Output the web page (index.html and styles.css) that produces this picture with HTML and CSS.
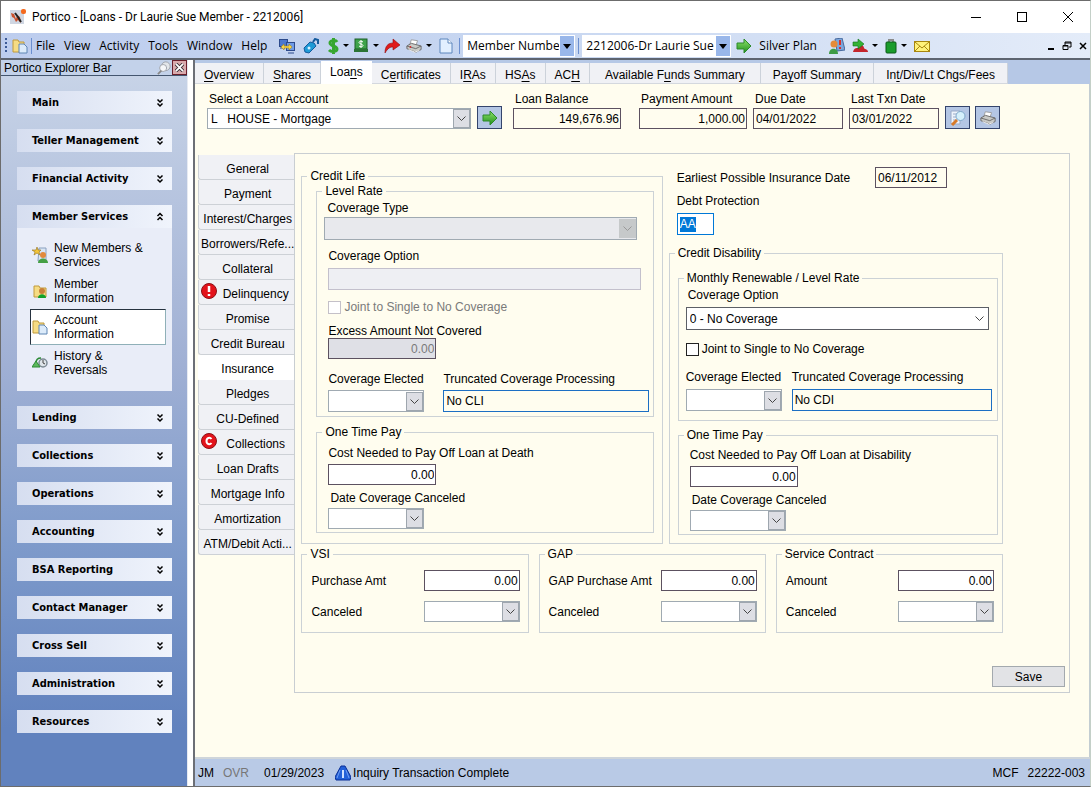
FILE: index.html
```html
<!DOCTYPE html>
<html lang="en">
<head>
<meta charset="utf-8">
<title>Portico - [Loans - Dr Laurie Sue Member - 2212006]</title>
<link rel="stylesheet" href="styles.css">
</head>
<body>
<svg class="defs" aria-hidden="true">
  <defs>
    <linearGradient id="green" x1="0" y1="0" x2="0" y2="1"><stop offset="0" stop-color="#8ee36a"/><stop offset="1" stop-color="#1f8f1c"/></linearGradient>
    <symbol id="i-go" viewBox="0 0 16 16"><path d="M1 5h7V1l7 7-7 7v-4H1z" fill="url(#green)" stroke="#2c8a2a"/></symbol>
    <symbol id="i-folder" viewBox="0 0 16 16"><path d="M1 2h5l1 2h5v10H1z" fill="#f6dc84" stroke="#c09a3c"/><path d="M7 6h5l3 3v6H7z" fill="#dcebfa" stroke="#5f86b4"/></symbol>
    <symbol id="i-print" viewBox="0 0 18 16"><path d="M6 1l7 1-2 6-7-1z" fill="#fff" stroke="#999"/><path d="M1 8l5-3 11 3v4l-6 3-10-4z" fill="#c9cac6" stroke="#666"/><path d="M1 8l10 3 6-3" fill="none" stroke="#666"/><path d="M3 12l7 3 5-2" fill="none" stroke="#fff"/></symbol>
    <symbol id="i-down" viewBox="0 0 8 10"><path d="M1.500 1.500l2.500 2.500 2.500-2.500M1.500 5.500l2.500 2.500 2.500-2.500" fill="none" stroke="#000" stroke-width="1.500"/></symbol>
    <symbol id="i-up" viewBox="0 0 8 10"><path d="M1.500 4l2.500-2.500 2.500 2.500M1.500 8l2.500-2.500 2.500 2.500" fill="none" stroke="#000" stroke-width="1.500"/></symbol>
  </defs>
</svg>
<div class="window">
  <header class="titlebar">
    <svg class="app-icon" viewBox="0 0 16 16"><rect x="0" y="1" width="14" height="14" fill="#cfd6e2"/><path d="M1 4l3 1 2 5 1-4 3 2 1 6-3-3-2 2-2-4-2-1z" fill="#c9502c"/><path d="M5 4l3 4 3 5" stroke="#222" stroke-width="2" fill="none"/><rect x="11" y="0" width="5" height="5" rx="2" fill="#f4691e"/></svg>
    <h1>Portico - [Loans - Dr Laurie Sue Member - 2212006]</h1>
    <div class="win-buttons">
      <button aria-label="Minimize"><svg viewBox="0 0 12 12"><path d="M1 6.500h10" stroke="#000"/></svg></button>
      <button aria-label="Maximize"><svg viewBox="0 0 12 12"><rect x="1.500" y="1.500" width="9" height="9" fill="none" stroke="#000"/></svg></button>
      <button aria-label="Close"><svg viewBox="0 0 12 12"><path d="M1 1l10 10M11 1L1 11" stroke="#000"/></svg></button>
    </div>
  </header>

  <nav class="toolbar" aria-label="Menu">
    <span class="grip"></span>
    <svg class="ic" viewBox="0 0 16 16"><use href="#i-folder"/></svg>
    <span class="sep"></span>
    <div class="menus">
      <button>File</button><button>View</button><button>Activity</button><button>Tools</button><button>Window</button><button>Help</button>
    </div>
    <div class="tools">
      <button aria-label="Connect"><svg class="ic" viewBox="0 0 16 16"><rect x=".5" y="1.500" width="8" height="7" fill="#4b78cf" stroke="#2c4a8c"/><rect x="7.500" y="4.500" width="8" height="8" fill="#6f9be6" stroke="#2c4a8c"/><path d="M9 15h6M1 10h5" stroke="#2c4a8c"/><path d="M2 9l3-3v2h5V6l3 3-3 3v-2H5v2z" fill="#f7d64a" stroke="#a8861d" stroke-width=".6"/></svg></button>
      <button aria-label="Scanner"><svg class="ic" viewBox="0 0 16 16"><path d="M1 10l6-6 4 1 2 3-7 7-4-1z" fill="#1f9ad6" stroke="#145a9c"/><path d="M10 4l2-3 3 1v4" fill="none" stroke="#145a9c" stroke-width="2"/><circle cx="6" cy="10" r="1.500" fill="#d6f1ff"/></svg></button>
    </div>
    <div class="tools split">
      <button aria-label="Cash"><svg class="ic narrow" viewBox="0 0 12 16"><path d="M10 4C9 2 3 2 3 5s7 3 7 6-6 3-8 1M6.500 0v16" fill="none" stroke="#37a62f" stroke-width="3"/></svg><i class="caret"></i></button>
      <button aria-label="Check"><svg class="ic" viewBox="0 0 16 16"><rect x="2" y="1" width="12" height="10" fill="#3fa34b" stroke="#1d5e27"/><path d="M10 4c-1-1-4-1-4 .5S10 6 10 7.500 7 9 6 8M8 2v8" fill="none" stroke="#fff"/><path d="M1 11h14v3H1z" fill="#2b7435"/></svg><i class="caret"></i></button>
    </div>
    <div class="tools close-set">
      <button aria-label="Forward"><svg class="ic" viewBox="0 0 16 16"><path d="M1 15C1 8 4 5 9 5V1l7 6-7 5V9C6 9 4 10 1 15z" fill="#e01b1b" stroke="#8d0d0d" stroke-width=".6"/></svg></button>
      <button aria-label="Print"><svg class="ic" viewBox="0 0 18 16"><use href="#i-print"/><circle cx="5" cy="9" r="1" fill="#e02020"/></svg><i class="caret"></i></button>
      <button aria-label="New page"><svg class="ic" viewBox="0 0 16 16"><path d="M2 1h8l4 4v10H2z" fill="#e2efff" stroke="#5d86bd"/><path d="M10 1v4h4" fill="#fff" stroke="#5d86bd"/></svg></button>
    </div>
    <span class="sep"></span>
    <select class="tb-select by" aria-label="Search by"><option>Member Numbe</option></select>
    <span class="sep"></span>
    <select class="tb-select who" aria-label="Member"><option>2212006-Dr Laurie Sue</option></select>
    <button class="go" aria-label="Go"><svg class="ic" viewBox="0 0 16 16"><use href="#i-go"/></svg></button>
    <button class="plan">Silver Plan</button>
    <div class="tools last">
      <button aria-label="People"><svg class="ic" viewBox="0 0 16 16"><path d="M6 1l7-1 3 12-8 1z" fill="#7ca6dc" stroke="#47699d"/><path d="M11 2v5M11 9v2" stroke="#d8302a" stroke-width="2"/><circle cx="5" cy="6" r="3.500" fill="#e58b3a"/><path d="M0 16c0-7 9-7 9 0z" fill="#3e9b46"/></svg></button>
      <button aria-label="Transfer"><svg class="ic" viewBox="0 0 16 16"><path d="M1 14c1-4 3-4 5-4s1-3 3-3 3 2 3 3 4 1 4 4z" fill="#c4252c"/><path d="M1 4h5V1l6 5-6 5V8H1z" fill="#35b335" stroke="#13701a" stroke-width=".6"/></svg><i class="caret"></i></button>
      <button aria-label="Bag"><svg class="ic narrow" viewBox="0 0 12 16"><path d="M4 5V2h4v3" fill="none" stroke="#8b8b8b" stroke-width="2"/><rect x="1" y="4" width="10" height="11" rx="1" fill="#1a9c2c" stroke="#0b5a17"/></svg><i class="caret"></i></button>
      <button aria-label="Mail"><svg class="ic" viewBox="0 0 16 16"><rect x=".5" y="3.500" width="15" height="10" fill="#fff27a" stroke="#a8860e"/><path d="M1 4l7 6 7-6M1 13l5-5M15 13l-5-5" fill="none" stroke="#a8860e"/></svg></button>
    </div>
    <div class="mdi">
      <button aria-label="Minimize document"><svg viewBox="0 0 10 10"><path d="M2 8h6" stroke="#000" stroke-width="2"/></svg></button>
      <button aria-label="Restore document"><svg viewBox="0 0 10 10"><path d="M3 4V1h6v5H7M3 2h6" fill="none" stroke="#000"/><path d="M1 4.500h5v4H1zM1 5h5" fill="none" stroke="#000"/></svg></button>
      <button aria-label="Close document"><svg viewBox="0 0 10 10"><path d="M2 2l6 6M8 2L2 8" stroke="#000" stroke-width="1.500"/></svg></button>
    </div>
  </nav>

  <div class="workspace">
    <aside class="explorer">
      <div class="explorer-head">
        <h2>Portico Explorer Bar</h2>
        <button class="pin" aria-label="Pin"><svg viewBox="0 0 16 16"><circle cx="10" cy="6" r="5" fill="#e3e6ea" stroke="#9a9ea6"/><circle cx="7" cy="8" r="4" fill="#f6f7f9" stroke="#9a9ea6"/><path d="M5 11l-4 4" stroke="#888" stroke-width="2"/></svg></button>
        <button class="close" aria-label="Close explorer"><svg viewBox="0 0 10 10"><path d="M1 1l8 8M9 1L1 9" stroke="#3c3036" stroke-width="4"/><path d="M1 1l8 8M9 1L1 9" stroke="#fff" stroke-width="2"/></svg></button>
      </div>
      <nav class="groups" aria-label="Explorer">
        <button class="group">Main<svg class="chev"><use href="#i-down"/></svg></button>
        <button class="group">Teller Management<svg class="chev"><use href="#i-down"/></svg></button>
        <button class="group">Financial Activity<svg class="chev"><use href="#i-down"/></svg></button>
        <section>
          <button class="group" aria-expanded="true">Member Services<svg class="chev"><use href="#i-up"/></svg></button>
          <div class="items">
            <a href="#new"><svg class="ic" viewBox="0 0 16 16"><path d="M7 1h7v13H6z" fill="#d9e6f5" stroke="#8aa0bf"/><path d="M5 0l1 3h3L7 5l1 3-3-2-3 2 1-3-3-2h4z" fill="#f3c53a" stroke="#94701a" stroke-width=".6"/><circle cx="11" cy="8" r="3" fill="#e28a3c"/><path d="M6 16c0-6 10-6 10 0z" fill="#45a045"/></svg><span>New Members &amp; Services</span></a>
            <a href="#member"><svg class="ic" viewBox="0 0 16 16"><path d="M2 3h5l1 2h6v9H2z" fill="#f6dc84" stroke="#c09a3c"/><circle cx="10" cy="8" r="3" fill="#c8813a"/><path d="M6 15c0-5 8-5 8 0z" fill="#12a02a"/></svg><span>Member Information</span></a>
            <a href="#account" class="current" aria-current="page"><svg class="ic" viewBox="0 0 16 16"><use href="#i-folder"/></svg><span>Account Information</span></a>
            <a href="#history"><svg class="ic" viewBox="0 0 16 16"><circle cx="11" cy="8" r="4" fill="#dfe5ea" stroke="#7d8a94" stroke-width="1.500"/><path d="M11 5v3l2 1" stroke="#444" fill="none"/><path d="M9 3C5 3 4 6 4 8" stroke="#2b8a35" stroke-width="1.500" fill="none"/><path d="M0 12l4-6 4 6z" fill="#5cb85c" stroke="#2b8a35"/></svg><span>History &amp; Reversals</span></a>
          </div>
        </section>
        <button class="group">Lending<svg class="chev"><use href="#i-down"/></svg></button>
        <button class="group">Collections<svg class="chev"><use href="#i-down"/></svg></button>
        <button class="group">Operations<svg class="chev"><use href="#i-down"/></svg></button>
        <button class="group">Accounting<svg class="chev"><use href="#i-down"/></svg></button>
        <button class="group">BSA Reporting<svg class="chev"><use href="#i-down"/></svg></button>
        <button class="group">Contact Manager<svg class="chev"><use href="#i-down"/></svg></button>
        <button class="group">Cross Sell<svg class="chev"><use href="#i-down"/></svg></button>
        <button class="group">Administration<svg class="chev"><use href="#i-down"/></svg></button>
        <button class="group">Resources<svg class="chev"><use href="#i-down"/></svg></button>
      </nav>
    </aside>

    <main class="main">
      <div class="tabs">
        <button><u>O</u>verview</button><button><u>S</u>hares</button><button class="active">Loa<u>n</u>s</button><button>C<u>e</u>rtificates</button><button>I<u>R</u>As</button><button>HS<u>A</u>s</button><button>AC<u>H</u></button><button class="wider">Available F<u>u</u>nds Summary</button><button class="wide">Pa<u>y</u>off Summary</button><button class="wide">In<u>t</u>/Div/Lt Chgs/Fees</button>
      </div>
      <div class="page">
        <div class="summary">
          <div class="field account"><label for="acct">Select a Loan Account</label><select id="acct" class="combo"><option>L &nbsp; HOUSE - Mortgage</option></select></div>
          <button class="tool-btn first" aria-label="Open account"><svg class="ic" viewBox="0 0 16 16"><use href="#i-go"/></svg></button>
          <div class="field amount balance"><label for="bal">Loan Balance</label><input id="bal" class="num" value="149,676.96"></div>
          <div class="field amount"><label for="pay">Payment Amount</label><input id="pay" class="num" value="1,000.00"></div>
          <div class="field date"><label for="due">Due Date</label><input id="due" value="04/01/2022"></div>
          <div class="field date"><label for="last">Last Txn Date</label><input id="last" value="03/01/2022"></div>
          <button class="tool-btn" aria-label="Preview"><svg class="ic" viewBox="0 0 16 16"><path d="M1 1h9v13H1z" fill="#eef3fb" stroke="#9aabc8"/><path d="M3 4h4M3 7h3M3 10h4" stroke="#9aabc8"/><path d="M7 10l-5 5" stroke="#d77a2a" stroke-width="3"/><circle cx="10.500" cy="6" r="4.500" fill="#d5f0fb" stroke="#7fa7c9"/></svg></button>
          <button class="tool-btn" aria-label="Print loan"><svg class="ic" viewBox="0 0 18 16"><use href="#i-print"/></svg></button>
        </div>

        <div class="detail">
          <div class="side-tabs">
            <button>General</button><button>Payment</button><button>Interest/Charges</button><button>Borrowers/Refe...</button><button>Collateral</button>
            <button class="flag"><svg class="badge" viewBox="0 0 16 16"><circle cx="8" cy="8" r="7.500" fill="#e3131b" stroke="#8c1015"/><path d="M8 3v6M8 11v2" stroke="#fff" stroke-width="2.500"/></svg>Delinquency</button>
            <button>Promise</button><button>Credit Bureau</button><button class="active">Insurance</button><button>Pledges</button><button>CU-Defined</button>
            <button class="flag"><svg class="badge" viewBox="0 0 16 16"><circle cx="8" cy="8" r="7.500" fill="#e3131b" stroke="#8c1015"/><path d="M10.500 6C9 4 5.500 4.500 5.500 8S9 12 10.500 10" fill="none" stroke="#fff" stroke-width="2"/></svg>Collections</button>
            <button>Loan Drafts</button><button>Mortgage Info</button><button>Amortization</button><button>ATM/Debit Acti...</button>
          </div>

          <form class="form">
            <div class="columns">
              <fieldset class="outer">
                <legend>Credit Life</legend>
                <fieldset class="inner rate">
                  <legend>Level Rate</legend>
                  <div class="field type"><label for="ctype">Coverage Type</label><select id="ctype" class="combo" disabled><option></option></select></div>
                  <div class="field option"><label for="copt">Coverage Option</label><input id="copt" disabled></div>
                  <label class="check"><input type="checkbox" disabled>Joint to Single to No Coverage</label>
                  <div class="field excess"><label for="excess">Excess Amount Not Covered</label><input id="excess" class="num" value="0.00" disabled></div>
                  <div class="pair">
                    <div class="field elected"><label for="ce1">Coverage Elected</label><select id="ce1" class="combo"><option></option></select></div>
                    <div class="field trunc"><label for="tr1">Truncated Coverage Processing</label><input id="tr1" value="No CLI"></div>
                  </div>
                </fieldset>
                <fieldset class="inner once">
                  <legend>One Time Pay</legend>
                  <div class="field cost"><label for="cost1">Cost Needed to Pay Off Loan at Death</label><input id="cost1" class="num" value="0.00"></div>
                  <div class="field cancel"><label for="dc1">Date Coverage Canceled</label><select id="dc1" class="combo"><option></option></select></div>
                </fieldset>
              </fieldset>

              <div class="right">
                <div class="earliest"><label for="early">Earliest Possible Insurance Date</label><input id="early" value="06/11/2012"></div>
                <div class="field debt"><label for="debt">Debt Protection</label><input id="debt" value="AA"></div>
                <fieldset class="outer disability">
                  <legend>Credit Disability</legend>
                  <fieldset class="inner monthly">
                    <legend>Monthly Renewable / Level Rate</legend>
                    <div class="field type"><label for="copt2">Coverage Option</label><select id="copt2" class="combo open"><option>0 - No Coverage</option></select></div>
                    <label class="check"><input type="checkbox">Joint to Single to No Coverage</label>
                    <div class="pair">
                      <div class="field elected"><label for="ce2">Coverage Elected</label><select id="ce2" class="combo"><option></option></select></div>
                      <div class="field trunc"><label for="tr2">Truncated Coverage Processing</label><input id="tr2" value="No CDI"></div>
                    </div>
                  </fieldset>
                  <fieldset class="inner once">
                    <legend>One Time Pay</legend>
                    <div class="field cost"><label for="cost2">Cost Needed to Pay Off Loan at Disability</label><input id="cost2" class="num" value="0.00"></div>
                    <div class="field cancel"><label for="dc2">Date Coverage Canceled</label><select id="dc2" class="combo"><option></option></select></div>
                  </fieldset>
                </fieldset>
              </div>
            </div>

            <div class="extras">
              <fieldset><legend>VSI</legend>
                <div class="line"><label for="vsi">Purchase Amt</label><input id="vsi" class="num" value="0.00"></div>
                <div class="line"><label for="vsic">Canceled</label><select id="vsic" class="combo"><option></option></select></div>
              </fieldset>
              <fieldset><legend>GAP</legend>
                <div class="line"><label for="gap">GAP Purchase Amt</label><input id="gap" class="num" value="0.00"></div>
                <div class="line"><label for="gapc">Canceled</label><select id="gapc" class="combo"><option></option></select></div>
              </fieldset>
              <fieldset><legend>Service Contract</legend>
                <div class="line"><label for="svc">Amount</label><input id="svc" class="num" value="0.00"></div>
                <div class="line"><label for="svcc">Canceled</label><select id="svcc" class="combo"><option></option></select></div>
              </fieldset>
            </div>
            <button type="button" class="save">Save</button>
          </form>
        </div>
      </div>
      <footer class="status">
        <span>JM</span><span class="off">OVR</span><span class="today">01/29/2023</span>
        <svg class="ic" viewBox="0 0 16 16"><path d="M6 1h4l6 11-1 3H1l-1-3z" fill="#2360d8" stroke="#0b2f96"/><path d="M8 5v8" stroke="#cfe0ff" stroke-width="2"/><path d="M5 5l-3 8M11 5l3 8" stroke="#6f9df2"/></svg>
        <span>Inquiry Transaction Complete</span>
        <span class="mcf">MCF</span><span>22222-003</span>
      </footer>
    </main>
  </div>
</div>
</body>
</html>
```
FILE: styles.css
```css
* { box-sizing: border-box; }
body {
  margin: 0;
  color: #000;
  font: 12px/14px "Liberation Sans", Arial, sans-serif;
}
button, input, select {
  margin: 0;
  color: inherit;
  font: inherit;
}
button {
  padding: 0;
  border: 0;
  background: none;
}
h1, h2 { margin: 0; font: inherit; }
svg { display: block; flex: none; }
.defs { position: absolute; width: 0; height: 0; }
.ic { width: 16px; height: 16px; }
.ic.narrow { width: 12px; }

.window {
  display: flex;
  flex-direction: column;
  min-height: 100vh;
  border: 1px solid #6c6c6c;
  border-right-color: #c4d0c8;
  background: #fff;
}

/* Title bar */
.titlebar {
  display: flex;
  align-items: center;
  height: 32px;
  padding: 0 16px 0 9px;
  font: 12px/16px Roboto, "Noto Sans", sans-serif;
}
.app-icon { width: 16px; height: 16px; margin-right: 6px; }
.win-buttons { display: flex; gap: 34px; margin-left: auto; }
.win-buttons svg { width: 12px; height: 12px; }

/* Menu and tool bar */
.toolbar {
  display: flex;
  align-items: center;
  height: 27px;
  padding-left: 4px;
  border-bottom: 2px solid #5d6470;
  background: linear-gradient(90deg, #bdcdee, #c8d7f1 50%, #e4ecf9);
  font: 12px/16px "Open Sans", "Noto Sans", sans-serif;
  white-space: nowrap;
}
.toolbar button { display: flex; align-items: center; }
.grip {
  width: 2px;
  height: 16px;
  margin-right: 5px;
  background: repeating-linear-gradient(#3c5a96 0 2px, transparent 2px 4px);
}
.sep { width: 1px; height: 16px; margin: 0 3px; background: #6b8fd0; }
.menus { display: flex; gap: 9px; margin: 0 12px 0 1px; }
.tools { display: flex; gap: 8px; margin-right: 8px; }
.tools.split { gap: 4px; margin-right: 5px; }
.tools.close-set { gap: 6px; margin-right: 2px; }
.caret {
  margin-left: 4px;
  border: 3px solid transparent;
  border-top-color: #000;
  border-bottom: 0;
}
.tb-select {
  height: 22px;
  padding: 0 16px 0 4px;
  border: 0;
  border-radius: 0;
  appearance: none;
  background: url("data:image/svg+xml,%3Csvg xmlns='http://www.w3.org/2000/svg' width='14' height='20'%3E%3Crect width='14' height='20' fill='%2399b7ea'/%3E%3Cpath d='M3 8h8l-4 5z'/%3E%3C/svg%3E") no-repeat right 1px center #fff;
}
.by { width: 112px; }
.who { width: 149px; }
.go { margin: 0 7px 0 5px; }
.plan { margin-right: 12px; }
.tools.last { gap: 7px; }
.mdi { display: flex; gap: 6px; margin-left: auto; padding-right: 2px; }
.mdi svg { width: 10px; height: 10px; }

/* Explorer bar */
.workspace { display: flex; flex: 1; }
.explorer {
  flex: 0 0 187px;
  border-right: 1px solid #e6eaf2;
  background: linear-gradient(#c9d5e8, #a0b0d4 42%, #7f9bcb 66%, #6182be 92%);
}
.explorer-head {
  display: flex;
  align-items: center;
  height: 16px;
  padding-left: 3px;
  border-bottom: 1px solid #44566f;
  background: #c3d2ea;
}
.pin { margin-left: auto; }
.pin svg { width: 16px; height: 14px; }
.close {
  padding: 2px;
  border: 1px solid #6a1f2c;
  background: #d9a9ac;
}
.close svg { width: 9px; height: 9px; }
.groups {
  display: flex;
  flex-direction: column;
  gap: 15px;
  padding: 15px 15px 15px 16px;
}
.group {
  display: flex;
  align-items: center;
  justify-content: space-between;
  width: 100%;
  height: 23px;
  padding: 0 8px 0 15px;
  background: linear-gradient(90deg, #d6def0, #f0f4fc);
  font: bold 11px/14px "DejaVu Sans Condensed", "Noto Sans", sans-serif;
}
.chev { width: 8px; height: 10px; }
.items { padding: 9px 6px 10px 13px; background: #e9edf8; }
.items a {
  display: flex;
  align-items: center;
  gap: 6px;
  min-height: 36px;
  padding: 3px 21px 3px 1px;
  border: 1px solid transparent;
  color: inherit;
  text-decoration: none;
}
.items .current { border-color: #26323f #8fb0b8 #8fb0b8 #26323f; background: #fff; }

/* Main area */
.main {
  display: flex;
  flex: 1;
  flex-direction: column;
  min-width: 0;
  margin-left: 5px;
  border-left: 2px solid #6c6f76;
}
.tabs {
  display: flex;
  align-items: flex-end;
  height: 24px;
  background: #b6c8e6;
}
.tabs button {
  height: 21px;
  padding: 4px 9px 0;
  border-right: 1px solid #ccd2da;
  border-bottom: 1px solid #d4d8de;
  background: #f0f1f5;
  white-space: nowrap;
}
.tabs .active { height: 23px; padding-top: 0; padding-bottom: 1px; border: 0; background: #fff; }
.tabs .wide { padding-left: 12px; padding-right: 12px; }
.tabs .wider { padding-left: 15px; padding-right: 15px; }
u { text-underline-offset: 2px; }
.page {
  display: flex;
  flex: 1;
  flex-direction: column;
  padding: 8px 19px 64px 3px;
  border-right: 1px solid #c3cdd2;
  background: #fffdef;
}
.field { display: flex; flex-direction: column; align-items: flex-start; gap: 2px; }
.field label { padding-left: 2px; white-space: nowrap; }
input, select {
  width: 100%;
  min-width: 0;
  height: 21px;
  padding: 0 2px;
  border: 1px solid #5c5160;
  border-radius: 0;
  background: transparent;
}
.num { padding-right: 1px; text-align: right; }
.combo {
  padding: 0 20px 0 3px;
  border-color: #a0aab2;
  appearance: none;
  background: url("data:image/svg+xml,%3Csvg xmlns='http://www.w3.org/2000/svg' width='17' height='19'%3E%3Crect x='.5' y='.5' width='16' height='18' fill='%23dddee4' stroke='%239ea6ae'/%3E%3Cpath d='M4.500 7.500l4 4 4-4' fill='none' stroke='%23444'/%3E%3C/svg%3E") no-repeat right center #fff;
}
.combo.open {
  border-color: #5c5f66;
  background-image: url("data:image/svg+xml,%3Csvg xmlns='http://www.w3.org/2000/svg' width='17' height='19'%3E%3Cpath d='M4.500 7.500l4 4 4-4' fill='none' stroke='%23444'/%3E%3C/svg%3E");
}
.combo:disabled {
  opacity: 1;
  background-color: #e8e9ed;
  background-image: url("data:image/svg+xml,%3Csvg xmlns='http://www.w3.org/2000/svg' width='17' height='19'%3E%3Crect width='17' height='19' fill='%23c6c9ca'/%3E%3Cpath d='M4.500 7.500l4 4 4-4' fill='none' stroke='%23999'/%3E%3C/svg%3E");
}

.summary { display: flex; align-items: flex-end; padding-left: 9px; }
.account { flex: 0 1 264px; }
.amount { flex: 0 1 108px; margin-right: 18px; }
.amount + .date { margin-left: -12px; }
.date { flex: 0 1 90px; margin-right: 6px; }
.tool-btn {
  display: flex;
  align-items: center;
  justify-content: center;
  width: 25px;
  height: 23px;
  margin-right: 5px;
  border: 1px solid #34446c;
  background: #b4c6e4;
}
.tool-btn.first { margin: 0 11px 0 6px; }

.detail { display: flex; flex: 1; margin-top: 24px; }
.side-tabs { display: flex; flex: 0 0 96px; flex-direction: column; padding-top: 2px; }
.side-tabs button {
  position: relative;
  height: 25px;
  padding: 4px 0 0 2px;
  border: solid #cdd1d6;
  border-width: 0 0 1px 1px;
  border-radius: 0 0 0 3px;
  background: #f0f1f5;
  white-space: nowrap;
}
.side-tabs .active { border-color: #fff; background: #fff; }
.side-tabs .flag { padding-left: 18px; }
.badge { position: absolute; top: 3px; left: 2px; width: 16px; height: 16px; }

/* Insurance form */
.form {
  display: flex;
  flex: 1;
  flex-direction: column;
  min-width: 0;
  padding: 15px 4px 5px 6px;
  border: 1px solid #c9ced2;
}
fieldset { min-width: 0; margin: 0; padding: 0; border: 1px solid #ccd2d6; }
legend { padding: 0 3px; }
.columns, .extras { margin-right: 62px; }
.columns { display: grid; grid-template-columns: 361fr 334fr; gap: 6px; }
.outer { padding: 1px 8px 10px 14px; }
.outer > legend { margin-left: -9px; }
.inner { display: flex; flex-direction: column; padding: 0 4px 4px 11px; }
.inner .check { display: flex; align-items: center; gap: 3px; }
input[type="checkbox"] {
  width: 13px;
  height: 13px;
  border: 1px solid #222;
  appearance: none;
  background: #fff;
}
.check:has(:disabled) { color: #7a7a7a; }
input[type="checkbox"]:disabled { border-color: #c4c0c8; }
.rate legend, .once legend { margin-left: -6px; }
.rate .type { margin: 3px 12px 0 -4px; }
.rate .type label { padding-left: 3px; }
.type .combo { height: 23px; }
.rate .option { gap: 5px; margin: 9px 8px 10px 0; }
.option label { padding-left: 0; }
.option input { height: 22px; border-color: #c3c0cc; background: #eeeff3; }
.excess { gap: 0; width: 108px; margin: 10px 0 13px; }
.excess label { padding-left: 0; }
.excess input { color: #7a7a7a; background: #dfe0e6; }
.pair { display: flex; gap: 19px; }
.pair .field { gap: 4px; }
.pair label { padding-left: 0; }
.elected { flex: 0 0 96px; }
.elected .combo { height: 22px; }
.trunc { flex: 1; }
.trunc input { height: 22px; border-color: #1c6fc4; }
.once { margin-top: 8px; padding-bottom: 3px; }
.cost { gap: 4px; width: 108px; margin-top: 7px; }
.cost label { padding-left: 0; }
.cost input { background: #fff; }
.cancel { gap: 3px; width: 96px; margin-top: 6px; }

.right { display: flex; flex-direction: column; }
.earliest { display: flex; align-items: center; justify-content: space-between; padding: 0 56px 0 8px; margin-top: -2px; }
.earliest input { width: 72px; }
.debt { gap: 5px; padding-left: 8px; margin: 6px 0 11px; }
.debt label { padding-left: 0; }
.debt input {
  width: 37px;
  height: 22px;
  border-color: #0078d7;
  color: #fff;
  background: linear-gradient(#0078d7, #0078d7) 2px center / 16px 15px no-repeat #fff;
}
.disability { flex: 1; padding: 11px 4px 6px 8px; }
.disability > legend { margin-left: -3px; }
.monthly { padding: 0 5px 9px 7px; }
.monthly legend { margin-left: -2px; }
.monthly .type { gap: 5px; margin: 3px 3px 12px 0; }
.monthly .pair { gap: 10px; margin-top: 14px; }
.monthly .pair .field { gap: 5px; }
.disability .once { margin-top: 7px; padding-left: 11px; }
.disability .cost { margin-top: 6px; }

.extras { display: grid; grid-template-columns: repeat(3, 1fr); gap: 10px; margin-top: 3px; }
.extras fieldset { padding: 9px 8px 10px 9px; }
.extras legend { margin-left: -4px; }
.line { display: flex; align-items: center; justify-content: space-between; white-space: nowrap; }
.line + .line { margin-top: 10px; }
.line input, .line select { width: 96px; }
.line input { background: #fff; }
.save {
  align-self: flex-end;
  width: 73px;
  height: 21px;
  margin-top: auto;
  border: 1px solid #a3a9ae;
  background: #e2e3e6;
}

/* Status bar */
.status {
  display: flex;
  align-items: center;
  height: 29px;
  padding: 0 5px 0 3px;
  border-top: 2px solid #cfd5da;
  background: #b9cae6;
}
.off { margin: 0 15px 0 9px; color: #777; }
.status .ic { margin: 0 2px 0 11px; }
.mcf { margin: 0 9px 0 auto; }
```
